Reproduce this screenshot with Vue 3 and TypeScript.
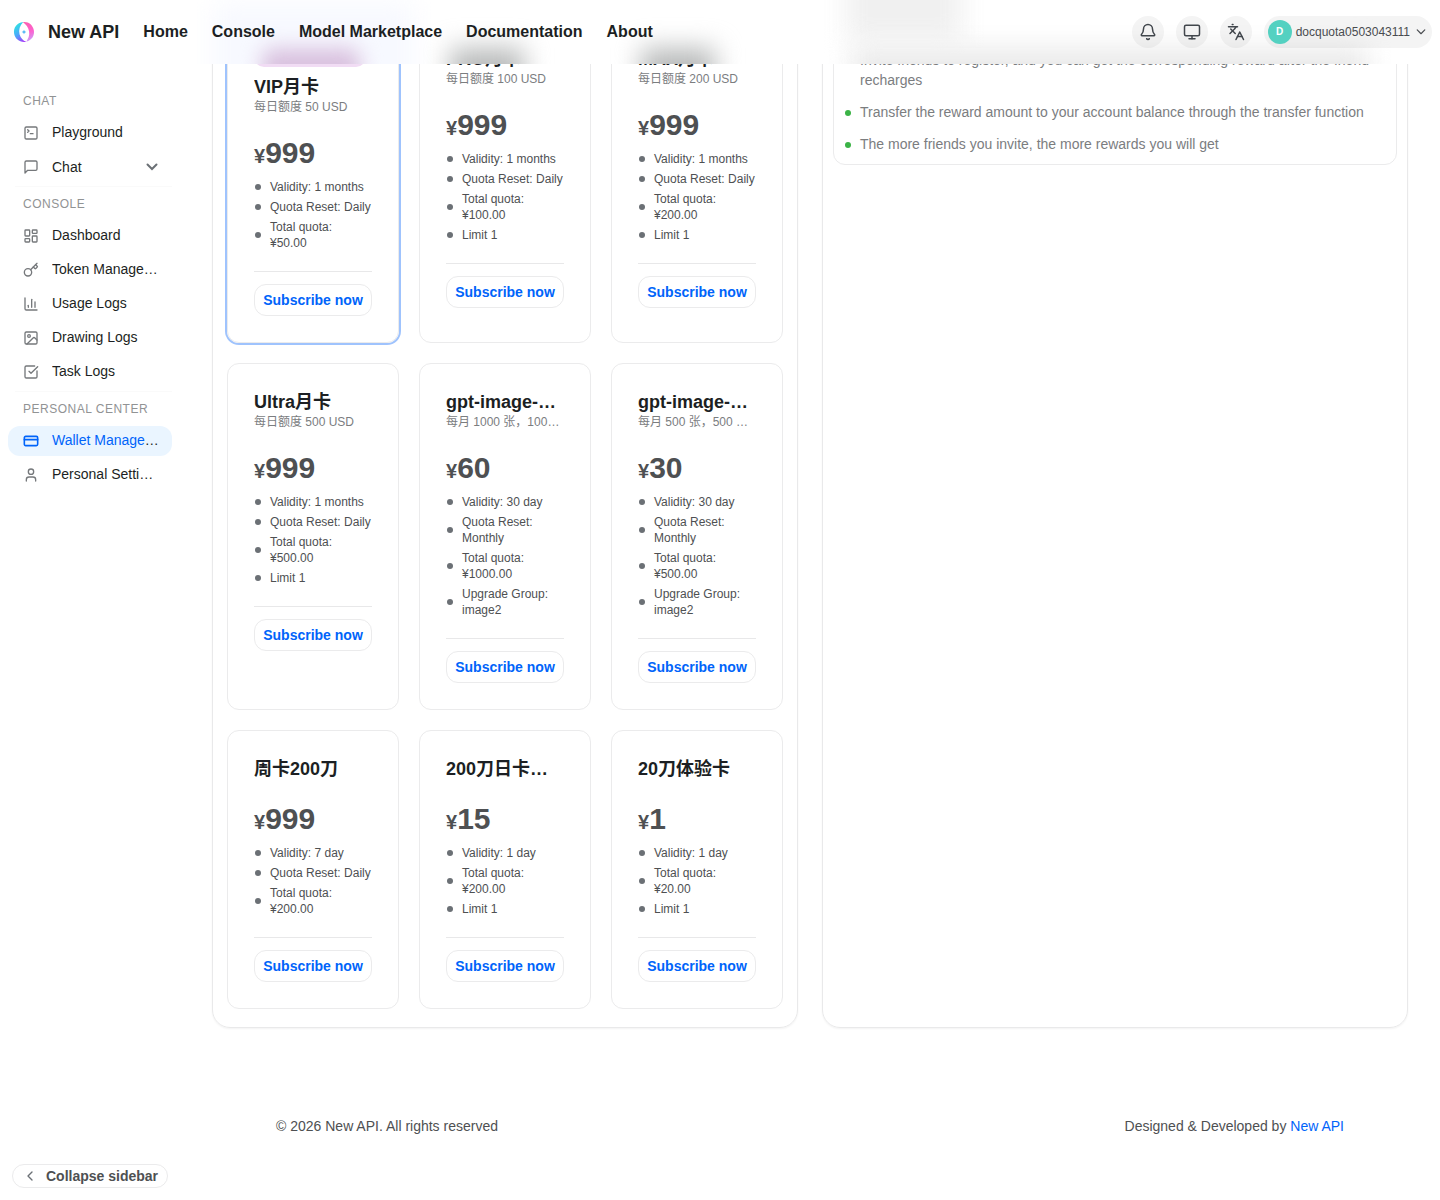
<script setup lang="ts">
interface Plan {
  title: string
  sub?: string
  price: string
  lines: string[]
  best?: boolean
}
interface Item {
  label: string
  icon: string
  active?: boolean
  arrow?: boolean
}

const nav = ['Home', 'Console', 'Model Marketplace', 'Documentation', 'About']

const icons: Record<string, string> = {
  terminal: '<path d="m7 11 2-2-2-2"/><path d="M11 13h4"/><rect width="18" height="18" x="3" y="3" rx="2"/>',
  message: '<path d="M21 15a2 2 0 0 1-2 2H7l-4 4V5a2 2 0 0 1 2-2h14a2 2 0 0 1 2 2z"/>',
  dashboard: '<rect width="7" height="9" x="3" y="3" rx="1"/><rect width="7" height="5" x="14" y="3" rx="1"/><rect width="7" height="9" x="14" y="12" rx="1"/><rect width="7" height="5" x="3" y="16" rx="1"/>',
  key: '<path d="m15.5 7.5 2.3 2.3a1 1 0 0 0 1.4 0l2.1-2.1a1 1 0 0 0 0-1.4L19 4"/><path d="m21 2-9.6 9.6"/><circle cx="7.5" cy="15.5" r="5.5"/>',
  chart: '<path d="M3 3v16a2 2 0 0 0 2 2h16"/><path d="M18 17V9"/><path d="M13 17V5"/><path d="M8 17v-3"/>',
  image: '<rect width="18" height="18" x="3" y="3" rx="2"/><circle cx="9" cy="9" r="2"/><path d="m21 15-3.086-3.086a2 2 0 0 0-2.828 0L6 21"/>',
  check: '<path d="M21 10.5V19a2 2 0 0 1-2 2H5a2 2 0 0 1-2-2V5a2 2 0 0 1 2-2h12.5"/><path d="m9 11 3 3L22 4"/>',
  card: '<rect width="20" height="14" x="2" y="5" rx="2"/><path d="M2 10h20"/>',
  user: '<path d="M19 21v-2a4 4 0 0 0-4-4H9a4 4 0 0 0-4 4v2"/><circle cx="12" cy="7" r="4"/>',
  bell: '<path d="M10.268 21a2 2 0 0 0 3.464 0"/><path d="M3.262 15.326A1 1 0 0 0 4 17h16a1 1 0 0 0 .74-1.673C19.41 13.956 18 12.499 18 8A6 6 0 0 0 6 8c0 4.499-1.411 5.956-2.738 7.326"/>',
  monitor: '<rect width="20" height="14" x="2" y="3" rx="2"/><path d="M8 21h8"/><path d="M12 17v4"/>',
  languages: '<path d="m5 8 6 6"/><path d="m4 14 6-6 2-3"/><path d="M2 5h12"/><path d="M7 2h1"/><path d="m22 22-5-10-5 10"/><path d="M14 18h6"/>',
}
const tools = ['bell', 'monitor', 'languages']
const glows = ['tint', 'purple', 'dark first', 'dark second', 'heading', 'line']

const groups: { name: string; items: Item[] }[] = [
  { name: 'CHAT', items: [{ label: 'Playground', icon: 'terminal' }, { label: 'Chat', icon: 'message', arrow: true }] },
  {
    name: 'CONSOLE',
    items: [
      { label: 'Dashboard', icon: 'dashboard' },
      { label: 'Token Management', icon: 'key' },
      { label: 'Usage Logs', icon: 'chart' },
      { label: 'Drawing Logs', icon: 'image' },
      { label: 'Task Logs', icon: 'check' },
    ],
  },
  {
    name: 'PERSONAL CENTER',
    items: [{ label: 'Wallet Management', icon: 'card', active: true }, { label: 'Personal Settings', icon: 'user' }],
  },
]

const month = 'Validity: 1 months'
const daily = 'Quota Reset: Daily'
const plans: Plan[] = [
  { title: 'VIP月卡', sub: '每日额度 50 USD', price: '999', best: true, lines: [month, daily, 'Total quota: ¥50.00'] },
  { title: 'PRO月卡', sub: '每日额度 100 USD', price: '999', lines: [month, daily, 'Total quota: ¥100.00', 'Limit 1'] },
  { title: 'MAX月卡', sub: '每日额度 200 USD', price: '999', lines: [month, daily, 'Total quota: ¥200.00', 'Limit 1'] },
  { title: 'Ultra月卡', sub: '每日额度 500 USD', price: '999', lines: [month, daily, 'Total quota: ¥500.00', 'Limit 1'] },
  { title: 'gpt-image-2 月卡', sub: '每月 1000 张，1000 USD', price: '60', lines: ['Validity: 30 day', 'Quota Reset: Monthly', 'Total quota: ¥1000.00', 'Upgrade Group: image2'] },
  { title: 'gpt-image-2 月卡', sub: '每月 500 张，500 USD', price: '30', lines: ['Validity: 30 day', 'Quota Reset: Monthly', 'Total quota: ¥500.00', 'Upgrade Group: image2'] },
  { title: '周卡200刀', price: '999', lines: ['Validity: 7 day', daily, 'Total quota: ¥200.00'] },
  { title: '200刀日卡体验', price: '15', lines: ['Validity: 1 day', 'Total quota: ¥200.00', 'Limit 1'] },
  { title: '20刀体验卡', price: '1', lines: ['Validity: 1 day', 'Total quota: ¥20.00', 'Limit 1'] },
]

const rewards = [
  'Invite friends to register, and you can get the corresponding reward after the friend recharges',
  'Transfer the reward amount to your account balance through the transfer function',
  'The more friends you invite, the more rewards you will get',
]
</script>

<template>
  <div class="app">
    <header class="header">
      <i v-for="g in glows" :key="g" class="glow" :class="g"></i>
      <svg class="logo" width="24" height="24" viewBox="0 0 24 24">
        <defs>
          <linearGradient id="lg-left" x1="0.4" y1="0" x2="0.7" y2="1">
            <stop offset="0" stop-color="#2ee6e0" />
            <stop offset="0.5" stop-color="#4aa8fb" />
            <stop offset="1" stop-color="#a63bfa" />
          </linearGradient>
          <linearGradient id="lg-right" x1="0.4" y1="0" x2="0.5" y2="1">
            <stop offset="0" stop-color="#fb5fae" />
            <stop offset="0.55" stop-color="#fd62cf" />
            <stop offset="1" stop-color="#c9a0fb" />
          </linearGradient>
        </defs>
        <g transform="rotate(-10 12 12)">
          <path d="M13 2.100C6.500 1.500 2 6.200 2 12c0 5.500 4.300 10 10.500 9.900C9.500 20.500 7.700 17.500 7.200 13.500 6.900 9 9 5 13 2.100z" fill="url(#lg-left)" />
          <path d="M12.500 2c5.500 0 9.500 4.500 9.500 10 0 5.400-3.700 9.500-9.500 10 2.500-2.500 4.600-5.700 4.600-9.500C17.100 8.200 15.300 5 12.500 2z" fill="url(#lg-right)" />
        </g>
        <path d="M12 9.700l.7 1.600 1.600.7-1.600.7-.7 1.600-.7-1.600-1.600-.7 1.600-.7z" fill="#4bb5f5" />
      </svg>
      <span class="brand">New API</span>
      <nav class="nav">
        <a v-for="n in nav" :key="n">{{ n }}</a>
      </nav>
      <div class="tools">
        <button v-for="t in tools" :key="t" class="round">
          <svg class="ico" width="18" height="18" viewBox="0 0 24 24" v-html="icons[t]"></svg>
        </button>
        <button class="account">
          <span class="avatar">D</span>
          <span>docquota0503043111</span>
          <svg class="ico" width="14" height="14" viewBox="0 0 24 24"><path d="m5.500 8.500 6.500 6.500 6.500-6.500" /></svg>
        </button>
      </div>
    </header>

    <aside class="sidebar">
      <section v-for="g in groups" :key="g.name" class="group">
        <h4>{{ g.name }}</h4>
        <div v-for="i in g.items" :key="i.label" class="item" :class="{ active: i.active, sub: i.arrow }">
          <svg class="ico" width="16" height="16" viewBox="0 0 24 24" v-html="icons[i.icon]"></svg>
          <span class="label"><span>{{ i.label }}</span></span>
          <svg v-if="i.arrow" class="arrow" width="16" height="16" viewBox="0 0 16 16"><path d="m3.500 5.500 4.500 4.500 4.500-4.500" /></svg>
        </div>
      </section>
      <button class="collapse">
        <svg class="ico" width="16" height="16" viewBox="0 0 24 24"><path d="m15 18-6-6 6-6" /></svg>
        Collapse sidebar
      </button>
    </aside>

    <main class="main">
      <div class="columns">
        <section class="panel plans">
          <article v-for="(p, k) in plans" :key="k" class="plan" :class="{ best: p.best }">
            <span v-if="p.best" class="badge"></span>
            <h3>{{ p.title }}</h3>
            <p v-if="p.sub" class="desc">{{ p.sub }}</p>
            <div class="price"><small>¥</small>{{ p.price }}</div>
            <ul>
              <li v-for="l in p.lines" :key="l"><i></i><span>{{ l }}</span></li>
            </ul>
            <hr />
            <button class="buy">Subscribe now</button>
          </article>
        </section>
        <section class="panel invite">
          <div class="rules">
            <div v-for="r in rewards" :key="r" class="rule"><i></i><span>{{ r }}</span></div>
          </div>
        </section>
      </div>
      <footer class="footer">
        <span>© 2026 New API. All rights reserved</span>
        <span>Designed &amp; Developed by <a>New API</a></span>
      </footer>
    </main>
  </div>
</template>

<style>
body {
  margin: 0;
  background: #fff;
}
</style>

<style scoped>
.app {
  position: relative;
  display: flex;
  width: 1440px;
  height: 1200px;
  overflow: hidden;
  font-family: "Liberation Sans", "Noto Sans CJK SC", sans-serif;
  font-size: 14px;
  line-height: 20px;
  color: #1c1f23;
}
.app * {
  box-sizing: border-box;
}
button {
  font: inherit;
  padding: 0;
  margin: 0;
}
h3, h4, p, ul, hr {
  margin: 0;
  padding: 0;
}
.ico {
  fill: none;
  stroke: currentColor;
  stroke-width: 2;
  stroke-linecap: round;
  stroke-linejoin: round;
  flex: none;
}
.header {
  position: absolute;
  inset: 0 0 auto 0;
  z-index: 5;
  height: 64px;
  display: flex;
  align-items: center;
  padding: 0 8px 0 12px;
  overflow: hidden;
  background: #fff;
}
.header > :not(.glow) {
  position: relative;
}
/* soft colour of the page content that lies behind the header */
.glow {
  position: absolute;
  filter: blur(13px);
}
.tint {
  left: 214px;
  top: 4px;
  width: 200px;
  height: 100px;
  background: #f7f9ff;
}
.purple {
  left: 262px;
  top: 48px;
  width: 98px;
  height: 50px;
  border-radius: 10px;
  background: #d9c1df;
  filter: blur(10px);
}
.dark {
  top: 48px;
  width: 74px;
  height: 50px;
  background: #b9bbbb;
}
.first {
  left: 450px;
}
.second {
  left: 641px;
}
.heading {
  left: 846px;
  top: -30px;
  width: 116px;
  height: 70px;
  background: #f0f0f0;
}
.line {
  left: 852px;
  top: 48px;
  width: 516px;
  height: 60px;
  background: #eaeaea;
}
.brand {
  margin-left: 12px;
  font-size: 18px;
  font-weight: 700;
}
.nav {
  display: flex;
  gap: 24px;
  margin-left: 24px;
  font-size: 16px;
  font-weight: 700;
  line-height: 24px;
}
.tools {
  margin-left: auto;
  display: flex;
  gap: 12px;
}
.round {
  display: flex;
  align-items: center;
  justify-content: center;
  width: 32px;
  height: 32px;
  border: 0;
  border-radius: 50%;
  background: rgba(46, 60, 56, 0.055);
  color: #41464c;
}
.account {
  display: flex;
  align-items: center;
  height: 32px;
  padding: 0 4px;
  border: 0;
  border-radius: 16px;
  background: rgba(46, 60, 56, 0.055);
  font-size: 12px;
  color: #494c50;
}
.account .ico {
  margin-left: 4px;
}
.avatar {
  width: 24px;
  height: 24px;
  margin-right: 4px;
  border-radius: 50%;
  background: #54d1c1;
  color: #fff;
  font-size: 10px;
  font-weight: 700;
  line-height: 24px;
  text-align: center;
}
.sidebar {
  display: flex;
  flex-direction: column;
  flex: none;
  width: 180px;
  height: 1200px;
  padding: 89px 8px 12px;
}
.group h4 {
  height: 24px;
  padding-left: 15px;
  margin-bottom: 5px;
  font-size: 12px;
  font-weight: 400;
  line-height: 24px;
  letter-spacing: 0.5px;
  color: #919394;
}
.group + .group {
  border-top: 1px solid;
  border-image: linear-gradient(90deg, transparent 8px, #fafafa 8px) 1;
  padding-top: 5px;
}
.item {
  display: flex;
  align-items: center;
  height: 30px;
  width: 164px;
  margin-bottom: 4px;
  padding: 0 12px 0 15px;
  border-radius: 12px;
}
.item.sub {
  height: 32px;
  margin-bottom: 2px;
}
.item .ico {
  color: #75787b;
}
.item.sub .ico,
.item.sub .arrow {
  margin-top: -2px;
}
.label {
  width: 107px;
  margin-left: 13px;
  padding-bottom: 2px;
  overflow: hidden;
  white-space: nowrap;
  text-overflow: ellipsis;
}
.item.active {
  background: #eaf5ff;
}
.item.active .ico {
  stroke-width: 2.4;
}
.item.active .ico,
.item.active .label span {
  color: #0064fa;
}
.arrow {
  flex: none;
  margin-left: -15px;
  fill: none;
  stroke: #6b7075;
  stroke-width: 2;
  stroke-linecap: round;
}
.collapse {
  display: flex;
  align-items: center;
  gap: 8px;
  width: 156px;
  height: 24px;
  margin: auto 0 0 4px;
  padding-left: 9px;
  border: 1px solid #ebebec;
  border-radius: 12px;
  background: transparent;
  font-weight: 700;
  color: #4e5052;
  white-space: nowrap;
}
.collapse .ico {
  color: #6b7075;
}
.main {
  flex: none;
  width: 1260px;
  padding: 0 32px;
}
.columns {
  display: grid;
  grid-template-columns: 586px 586px;
  gap: 24px;
  height: 1058px;
  margin-top: -30px;
}
.panel {
  border: 1px solid #e9e9ea;
  border-radius: 18px;
  box-shadow: 0 1px 2px rgba(0, 0, 0, 0.05);
}
.plans {
  display: grid;
  grid-template-columns: repeat(3, 172px);
  grid-template-rows: 323px 347px 279px;
  gap: 20px;
  padding: 49px 14px 18px;
}
.plan {
  display: flex;
  flex-direction: column;
  min-width: 0;
  padding: 26px;
  border: 1px solid #ebebec;
  border-radius: 12px;
}
.best {
  box-shadow: 0 0 0 2px #9fc3fd;
}
.badge {
  align-self: flex-start;
  height: 20px;
  width: 112px;
  margin-bottom: 8px;
  border-radius: 10px;
  background: #f1dcf4;
}
.plan h3 {
  height: 24px;
  overflow: hidden;
  font-size: 18px;
  font-weight: 700;
  line-height: 24px;
  white-space: nowrap;
  text-overflow: ellipsis;
}
.desc {
  height: 16px;
  overflow: hidden;
  font-size: 12px;
  line-height: 16px;
  color: #7b7d7f;
  white-space: nowrap;
  text-overflow: ellipsis;
}
.price {
  height: 36px;
  margin: 20px 0 8px;
  font-size: 30px;
  font-weight: 700;
  line-height: 36px;
  color: #4e5052;
}
.price small {
  font-size: 20px;
}
.plan ul {
  display: flex;
  flex-direction: column;
  gap: 4px;
  list-style: none;
}
.plan li {
  display: flex;
  align-items: center;
  gap: 9px;
  padding-left: 1px;
  font-size: 12px;
  line-height: 16px;
  color: #4e5052;
}
.plan li i {
  flex: none;
  width: 6px;
  height: 6px;
  border-radius: 50%;
  background: #6b7075;
}
.plan hr {
  height: 1px;
  margin: 20px 0 12px;
  border: 0;
  background: #e8e8e9;
}
.buy {
  flex: none;
  height: 32px;
  border: 1px solid #ebebec;
  border-radius: 12px;
  background: transparent;
  color: #0064fa;
  font-weight: 700;
  white-space: nowrap;
}
.invite {
  padding: 28px 10px 0;
}
.rules {
  height: 166px;
  padding: 50px 11px 0;
  border: 1px solid #ebebec;
  border-radius: 12px;
  color: #7b7d7f;
}
.rule {
  display: flex;
  align-items: flex-start;
  gap: 9px;
  margin-bottom: 12px;
}
.rule i {
  flex: none;
  width: 6px;
  height: 6px;
  margin-top: 8px;
  border-radius: 50%;
  background: #3bb346;
}
.footer {
  display: flex;
  justify-content: space-between;
  margin-top: 88px;
  padding: 0 64px;
  color: #4e5052;
}
.footer a {
  color: #0064fa;
}
</style>
